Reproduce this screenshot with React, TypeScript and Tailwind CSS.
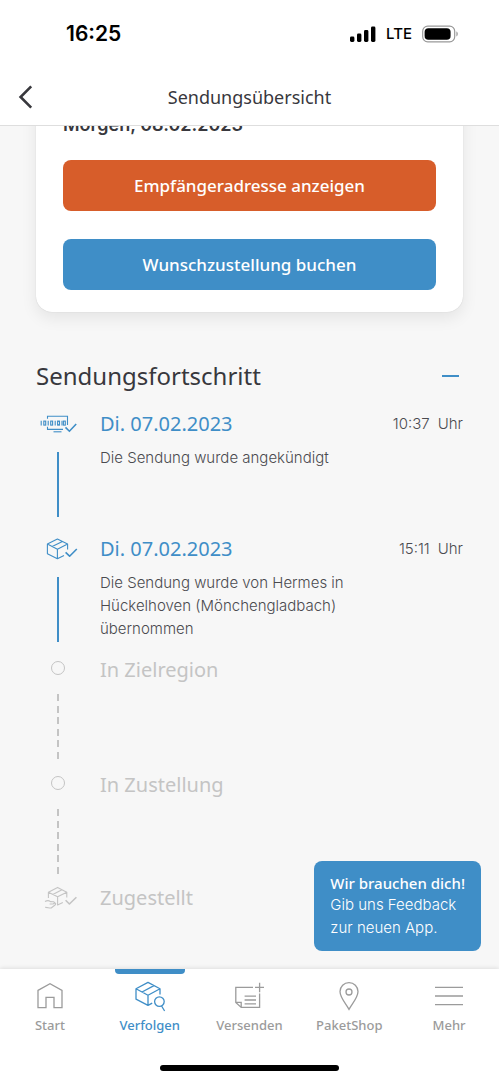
import type { ReactNode } from "react";

const title = "font-['Noto_Sans',sans-serif]";

function SignalIcon() {
  return (
    <svg width="26" height="17" viewBox="0 0 26 17" aria-hidden="true">
      <rect x="0" y="10.5" width="4.4" height="5.5" rx="1.4" />
      <rect x="7" y="7.5" width="4.4" height="8.5" rx="1.4" />
      <rect x="14" y="4" width="4.4" height="12" rx="1.4" />
      <rect x="21" y="0.5" width="4.4" height="15.5" rx="1.4" />
    </svg>
  );
}

function BatteryIcon() {
  return (
    <svg width="37" height="18" viewBox="0 0 37 18" aria-hidden="true">
      <rect x="0.7" y="1.2" width="32" height="15.6" rx="5" fill="none" stroke="#999" strokeWidth="1.2" />
      <rect x="2.6" y="3.2" width="26" height="11.6" rx="3.8" />
      <path d="M34.4 6.6c1.8.6 1.8 4.2 0 4.8z" fill="#999" />
    </svg>
  );
}

function AnnouncedIcon() {
  return (
    <svg width="40" height="20" viewBox="-2 0 40 20" fill="none" stroke="currentColor" strokeWidth="1.1" aria-hidden="true">
      <path d="M7.5 4.8V2.2H27.5V11M7.5 12.8V15.4H23" />
      <path d="M13.5 17.8H21.5" />
      <path d="M1.2 6.8v4.6M8.2 6.8v4.6M15.2 6.8v4.6M22 6.8v4.6" />
      <rect x="3.8" y="7.1" width="1.9" height="4" />
      <rect x="10.7" y="7.1" width="1.9" height="4" />
      <rect x="17.6" y="7.1" width="1.9" height="4" />
      <rect x="23.4" y="7.1" width="1.9" height="4" />
      <path d="M25.5 13.4 29.4 17.2 36.2 10" strokeWidth="1.6" />
    </svg>
  );
}

function ParcelIcon() {
  return (
    <svg width="40" height="22" viewBox="-8 0 40 22" fill="none" stroke="currentColor" strokeWidth="1.1" strokeLinejoin="round" aria-hidden="true">
      <path d="M21.6 11.6V6L11.4 1 1.4 6V15.8L11.4 20.8 18 17.4M1.4 6l10 5.2 10.2-5.2M11.4 11.2v9.6M6.2 8.5 16.4 3.4" />
      <path d="M19.6 14.4l4 3.8 7.2-7.2" strokeWidth="1.6" />
    </svg>
  );
}

function DeliveredIcon() {
  return (
    <svg width="40" height="24" viewBox="-6 0 40 24" fill="none" stroke="currentColor" strokeWidth="1.1" strokeLinejoin="round" aria-hidden="true">
      <path d="M4.4 12V6.2L13.6 1.4 22.8 6.2v5.4M4.4 6.2l9.2 4.6 9.2-4.6M13.6 10.8V19l5.2-2.4M8.8 8.4 18 3.7" />
      <path d="M1 15.6c2.4-1.4 4.2-1 5.4 0l3.2.2c1.4.6.6 2.2-.8 2.2H5.6M9.2 17.6l1.8-.6c1 .4.8 1.4 0 2l-3.8 3c-2 .4-3.6-.8-6-.6" />
      <path d="M21.6 14.2l3.8 3.8 7-6.8" strokeWidth="1.6" />
    </svg>
  );
}

function PendingIcon() {
  return <span className="size-3.5 rounded-full border border-[#c4c4c4]" />;
}

type StepProps = {
  icon: ReactNode;
  heading: string;
  text?: string;
  time?: string;
  line?: "solid" | "dashed";
};

function Step({ icon, heading, text, time, line }: StepProps) {
  const done = line === "solid";
  return (
    <li className={done ? "flex gap-5 first:mb-1.5" : "flex gap-5 text-[#c4c4c4]"}>
      <div className="flex w-11 shrink-0 flex-col items-center text-[#3f8ec7]">
        <span className={done ? "flex h-7 items-center" : "flex h-7 items-center text-[#c4c4c4]"}>{icon}</span>
        {line === "solid" && <span className="mt-3.5 mb-3 h-[65px] w-0.5 bg-[#3f8ec7]" />}
        {line === "dashed" && (
          <span className="mt-3 mb-2.5 flex h-[65px] flex-col justify-between">
            {[0, 1, 2, 3, 4, 5].map((n) => (
              <span key={n} className="h-[7px] w-0.5 bg-[#c4c4c4]" />
            ))}
          </span>
        )}
      </div>
      <div className={line === "dashed" ? "min-w-0 flex-1 pt-0.5" : "min-w-0 flex-1"}>
        <div className="flex items-center justify-between">
          <h3 className={`${title} text-xl leading-7 ${done ? "text-[#3f8ec7]" : ""}`}>{heading}</h3>
          {time && (
            <p className="flex gap-2 text-[15px] font-light text-[#4a4a4f]">
              <time>{time}</time>
              <span>Uhr</span>
            </p>
          )}
        </div>
        {text && <p className="mt-2 max-w-64 text-[15px] leading-[23px] font-light text-[#4a4a4f]">{text}</p>}
      </div>
    </li>
  );
}

function Tab({ label, active, children }: { label: string; active?: boolean; children: ReactNode }) {
  return (
    <a
      href="#"
      aria-current={active ? "page" : undefined}
      className={`flex flex-1 flex-col items-center ${active ? "text-[#3f8ec7]" : "text-[#9b9b9b]"}`}
    >
      <span className={active ? "h-[5px] w-[70px] rounded-b-sm bg-[#3f8ec7]" : "h-[5px]"} />
      <span className="mt-1.5 flex h-8 items-center">{children}</span>
      <span className={`${title} mt-[3px] text-[13px] leading-5 font-medium`}>{label}</span>
    </a>
  );
}

export default function App() {
  return (
    <div className="flex h-screen flex-col bg-[#f7f7f7] font-['Inter',sans-serif] text-[#38383d]">
      <header className="relative z-10 border-b border-[#dedede] bg-white">
        <div className="flex h-[68px] items-center justify-between pr-10 pl-[66px] text-black">
          <span className="text-[21px] font-semibold">16:25</span>
          <div className="flex items-center gap-2.5">
            <SignalIcon />
            <span className="text-[15px] font-medium">LTE</span>
            <BatteryIcon />
          </div>
        </div>
        <div className="grid h-[57px] grid-cols-[1fr_auto_1fr] items-center px-4">
          <button type="button" aria-label="Zurück" className="justify-self-start">
            <svg width="18" height="26" viewBox="0 0 18 26" fill="none" stroke="currentColor" strokeWidth="2.6" aria-hidden="true">
              <path d="M15.2 2.4 4.6 13l10.6 10.6" />
            </svg>
          </button>
          <h1 className={`${title} text-lg`}>Sendungsübersicht</h1>
        </div>
      </header>

      <div className="relative min-h-0 flex-1">
        <main className="h-full overflow-hidden px-9">
          <section className="-mt-8 rounded-2xl bg-white px-[27px] pt-[17px] pb-[22px] shadow-[0_0_1px_rgba(0,0,0,0.2),0_6px_16px_rgba(0,0,0,0.08)]">
            <p className="text-lg leading-7 font-semibold">Morgen, 08.02.2023</p>
            <div className={`${title} mt-[21px] flex flex-col gap-7 text-[17px] font-medium text-white`}>
              <button type="button" className="h-[51px] rounded-lg bg-[#d75d2a]">Empfängeradresse anzeigen</button>
              <button type="button" className="h-[51px] rounded-lg bg-[#3f8ec7]">Wunschzustellung buchen</button>
            </div>
          </section>

          <section className="mt-12">
            <div className="flex items-center justify-between">
              <h2 className={`${title} text-2xl`}>Sendungsfortschritt</h2>
              <button type="button" aria-label="Einklappen" className="py-3 pr-1">
                <span className="block h-0.5 w-[17px] bg-[#3f8ec7]" />
              </button>
            </div>
            <ol className="mt-[18px]">
              <Step icon={<AnnouncedIcon />} heading="Di. 07.02.2023" time="10:37" text="Die Sendung wurde angekündigt" line="solid" />
              <Step
                icon={<ParcelIcon />}
                heading="Di. 07.02.2023"
                time="15:11"
                text="Die Sendung wurde von Hermes in Hückelhoven (Mönchengladbach) übernommen"
                line="solid"
              />
              <Step icon={<PendingIcon />} heading="In Zielregion" line="dashed" />
              <Step icon={<PendingIcon />} heading="In Zustellung" line="dashed" />
              <Step icon={<DeliveredIcon />} heading="Zugestellt" />
            </ol>
          </section>
        </main>

        <a href="#" className="absolute right-[18px] bottom-[18px] rounded-lg bg-[#3f8ec7] px-4 py-3 text-white">
          <strong className={`${title} block text-[15px] leading-5 font-medium`}>Wir brauchen dich!</strong>
          <span className="block text-[15px] leading-[23px] font-light">
            Gib uns Feedback
            <br />
            zur neuen App.
          </span>
        </a>
      </div>

      <footer className="relative bg-white shadow-[0_-1px_4px_rgba(0,0,0,0.1)]">
        <nav className="flex">
          <Tab label="Start">
            <svg width="28" height="28" viewBox="0 0 28 28" fill="none" stroke="currentColor" strokeWidth="1.3" aria-hidden="true">
              <path d="M2 8.4 14 1.8l12 6.6v17.2h-8V15.4h-8v10.2H2z" />
            </svg>
          </Tab>
          <Tab label="Verfolgen" active>
            <svg width="32" height="32" viewBox="0 0 32 32" fill="none" stroke="currentColor" strokeWidth="1.3" strokeLinejoin="round" aria-hidden="true">
              <path d="M26 14.4V8.8L14 2.4 2 8.8v10.4l12 6.2 4.2-2.2M2 8.8l12 6.4 12-6.4M14 15.2v10.2M8 12 20 5.6" />
              <circle cx="25.4" cy="21.6" r="4.8" />
              <path d="M27.6 26 30.6 31" />
            </svg>
          </Tab>
          <Tab label="Versenden">
            <svg width="30" height="30" viewBox="0 0 30 30" fill="none" stroke="currentColor" strokeWidth="1.3" aria-hidden="true">
              <path d="M19 6.4H1.8v15l5.4 5h18.4V12.4M1.8 21.4h5.4v5M10.6 15.2h11.4M10.6 19h11.4M10.6 22.8h11.4M21 6.4h9M25.6 1.8v9.4" />
            </svg>
          </Tab>
          <Tab label="PaketShop">
            <svg width="22" height="30" viewBox="0 0 22 30" fill="none" stroke="currentColor" strokeWidth="1.3" aria-hidden="true">
              <path d="M11 28.4C7.6 22.4 2 16.6 2 10.6a9 9 0 0 1 18 0c0 6-5.6 11.8-9 17.8z" />
              <circle cx="11" cy="11" r="3" />
            </svg>
          </Tab>
          <Tab label="Mehr">
            <svg width="28" height="20" viewBox="0 0 28 20" stroke="currentColor" strokeWidth="1.3" aria-hidden="true">
              <path d="M0 1.4h28M0 10h28M0 18.6h28" />
            </svg>
          </Tab>
        </nav>
        <div className="mx-auto mt-[30px] mb-[9px] h-1.5 w-[179px] rounded-full bg-black" />
      </footer>
    </div>
  );
}
